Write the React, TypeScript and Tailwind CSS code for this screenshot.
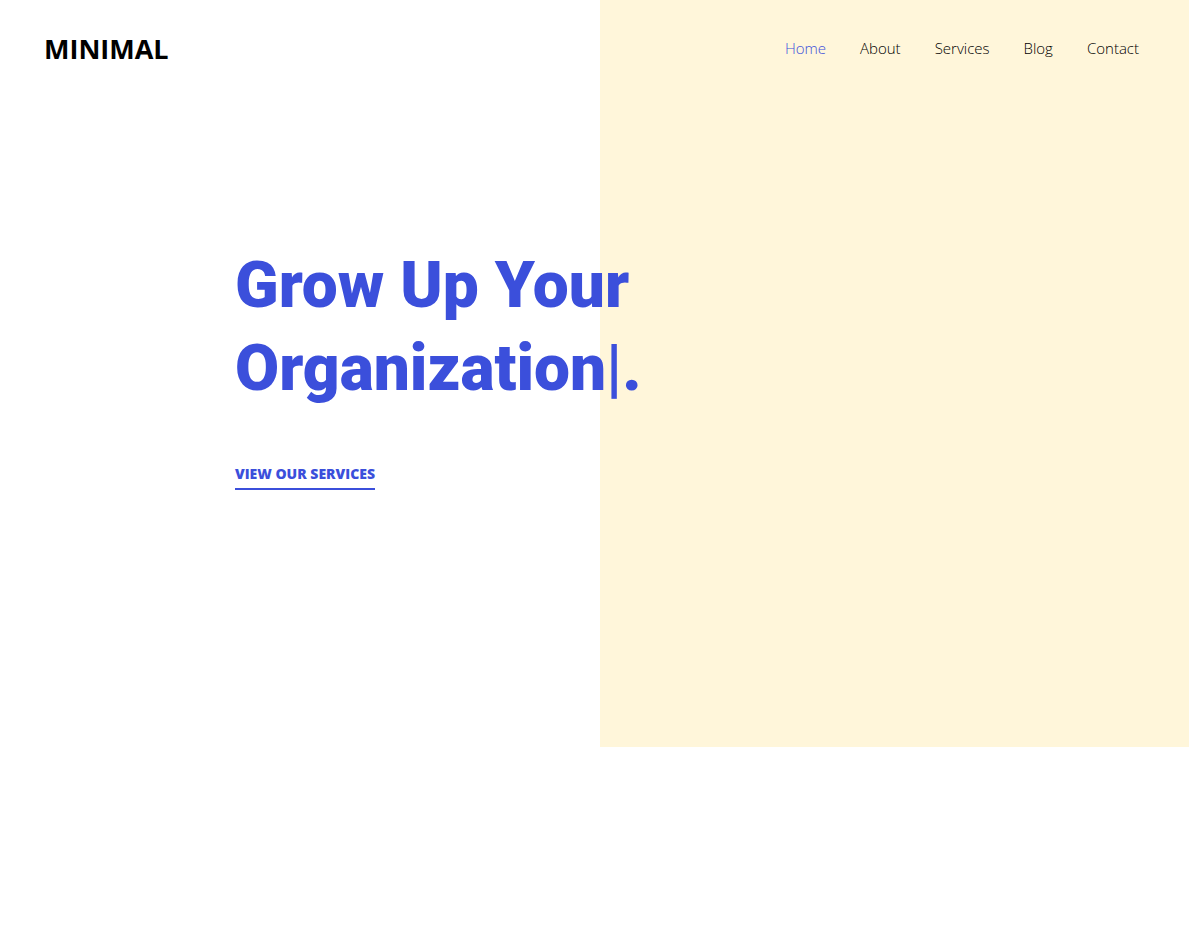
const links = ["Home", "About", "Services", "Blog", "Contact"];

export default function App() {
  return (
    <div className="min-h-screen bg-white font-['Open_Sans','Noto_Sans',sans-serif] text-black">
      <div className="flex min-h-[747px] flex-col bg-[linear-gradient(to_right,#ffffff_600px,#fff6da_600px)]">
        <header className="flex items-start justify-between px-11 pt-7">
          <a href="#" className="text-[27px] leading-[42px] font-bold">MINIMAL</a>
          <nav aria-label="Main" className="mt-2 mr-[6px] flex gap-[34px]">
            {links.map((label) => (
              <a
                key={label}
                href={`#${label.toLowerCase()}`}
                aria-current={label === "Home" ? "page" : undefined}
                className="text-[15px] leading-6 font-light aria-[current=page]:text-[#3b4fdb]"
              >
                {label}
              </a>
            ))}
          </nav>
        </header>
        <main className="pt-[174px] pl-[235px] text-[#3b4fdb]">
          <h1 className="font-['Roboto',sans-serif] text-[64px] leading-[83px] font-black">
            Grow Up Your
            <br />
            Organization<span className="font-bold">|</span>.
          </h1>
          <a
            href="#services"
            className="mt-[54px] inline-block border-b-2 border-current pb-1 text-sm leading-5 font-extrabold uppercase"
          >
            View our services
          </a>
        </main>
      </div>
    </div>
  );
}
